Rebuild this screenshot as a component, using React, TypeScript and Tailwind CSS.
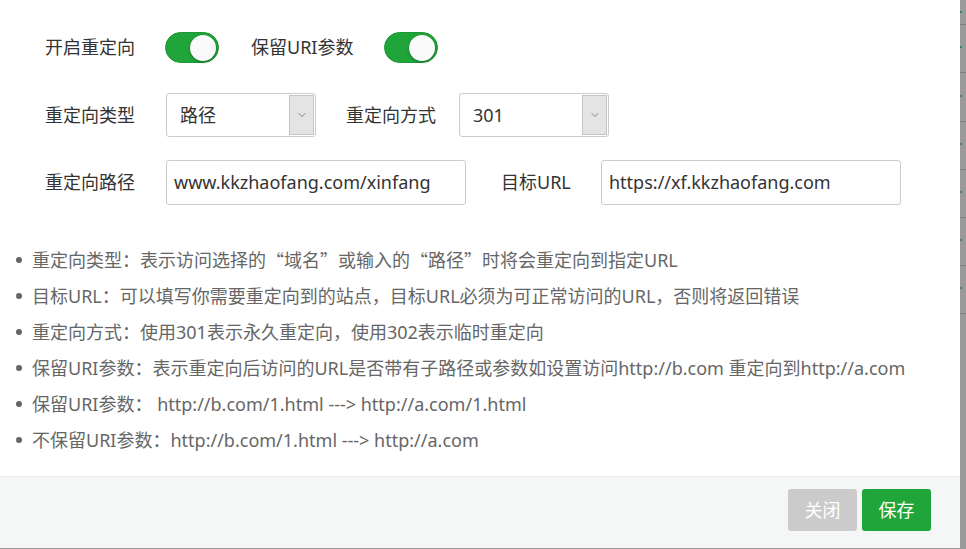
import { ChevronDown } from 'lucide-react'

const font = { fontFamily: '"Noto Sans", "Noto Sans CJK SC", sans-serif' }
const cjk = { fontFamily: '"Noto Sans CJK SC", sans-serif' }

function Toggle() {
  return (
    <div className="flex h-[31px] w-[54px] items-center justify-end rounded-full border border-[#1d9634] bg-[#20a53a] pr-[2px]">
      <div className="h-[26px] w-[26px] rounded-full bg-[#fafafa] shadow-[0_1px_3px_rgba(0,0,0,0.35)]" />
    </div>
  )
}

function Select({ value }: { value: string }) {
  return (
    <div className="flex h-[44px] w-[150px] items-stretch rounded-[3px] border border-[#cccccc] bg-white">
      <div className="flex flex-1 items-center pl-[13px] text-[18px] text-[#333]">{value}</div>
      <div className="m-[1px] flex w-[25px] items-center justify-center border border-[#c4c4c4] bg-[#e4e4e4]">
        <ChevronDown size={12} strokeWidth={1.6} className="text-[#666]" />
      </div>
    </div>
  )
}

function Input({ value }: { value: string }) {
  return (
    <div className="flex h-[45px] w-[300px] items-center rounded-[3px] border border-[#cccccc] bg-white pl-[7px] text-[18px] text-[#333]">
      {value}
    </div>
  )
}

const tips = [
  '重定向类型：表示访问选择的“域名”或输入的“路径”时将会重定向到指定URL',
  '目标URL：可以填写你需要重定向到的站点，目标URL必须为可正常访问的URL，否则将返回错误',
  '重定向方式：使用301表示永久重定向，使用302表示临时重定向',
  '保留URI参数：表示重定向后访问的URL是否带有子路径或参数如设置访问http://b.com 重定向到http://a.com',
  '保留URI参数： http://b.com/1.html ---> http://a.com/1.html',
  '不保留URI参数：http://b.com/1.html ---> http://a.com',
]

// full-width curly quotes come from the CJK face, as in the original
function Tip({ text }: { text: string }) {
  const parts = text.split(/([“”])/)
  return (
    <>
      {parts.map((p, i) =>
        p === '“' || p === '”' ? (
          <span key={i} style={cjk}>
            {p}
          </span>
        ) : (
          <span key={i}>{p}</span>
        ),
      )}
    </>
  )
}

const bgLines = [25, 48, 49, 48, 48, 48, 48]

export default function App() {
  return (
    <div className="flex h-[549px] w-[966px] items-start bg-[#9a9a9a]" style={font}>
      <div className="flex h-[548px] w-[960px] flex-col bg-white">
        <div className="flex-1 pl-[45px] pt-[32px] text-[18px] text-[#333]">
          <div className="flex h-[31px] items-center">
            <span className="w-[120px]">开启重定向</span>
            <Toggle />
            <span className="ml-[32px] w-[133px]">保留URI参数</span>
            <Toggle />
          </div>

          <div className="mt-[30px] flex items-center">
            <span className="w-[121px]">重定向类型</span>
            <Select value="路径" />
            <span className="ml-[30px] w-[113px]">重定向方式</span>
            <Select value="301" />
          </div>

          <div className="mt-[23px] flex items-center">
            <span className="w-[121px]">重定向路径</span>
            <Input value="www.kkzhaofang.com/xinfang" />
            <span className="ml-[35px] w-[100px]">目标URL</span>
            <Input value="https://xf.kkzhaofang.com" />
          </div>
        </div>

        <ul className="mb-[18px] flex flex-col pl-[16px] text-[18px] text-[#666]">
          {tips.map((t) => (
            <li key={t} className="flex h-[36px] items-center whitespace-pre">
              <span className="mr-[10px] h-[6px] w-[6px] rounded-full bg-[#666]" />
              <Tip text={t} />
            </li>
          ))}
        </ul>

        <div className="flex h-[72px] items-start justify-end gap-[5px] border-t border-[#ececec] bg-[#f5f6f6] pr-[29px] pt-[12px]">
          <button className="h-[42px] w-[69px] rounded-[3px] bg-[#cbcbcb] text-[18px] text-white">关闭</button>
          <button className="h-[42px] w-[69px] rounded-[3px] bg-[#20a53a] text-[18px] text-white">保存</button>
        </div>
      </div>

      {/* page behind the dialog, peeking out on the right */}
      <div className="flex w-[6px] flex-col">
        {bgLines.map((h, i) => (
          <div key={i} className="relative border-b border-[#7f7f7f]" style={{ height: h }}>
            <span className="absolute left-0 top-[45%] h-[2px] w-[2px] bg-[#2e8b57]" />
          </div>
        ))}
      </div>
    </div>
  )
}
